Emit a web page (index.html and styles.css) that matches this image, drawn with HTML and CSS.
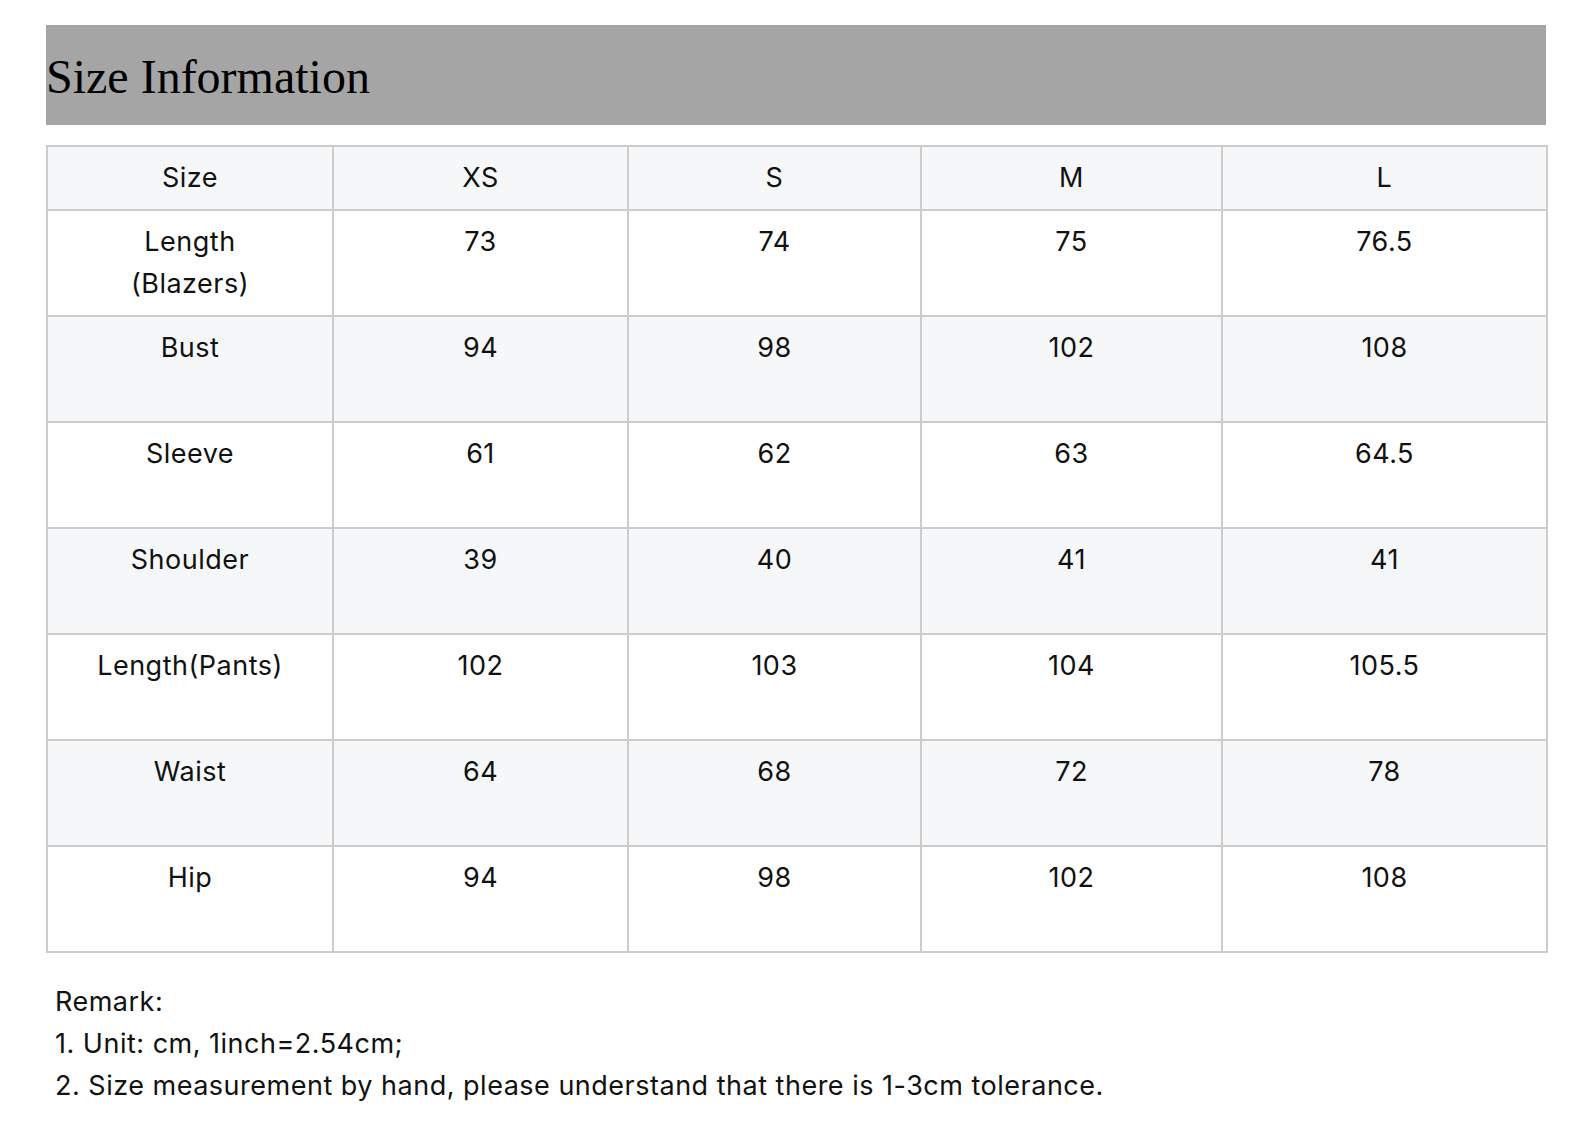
FILE: index.html
```html
<!DOCTYPE html>
<html lang="en">
<head>
<meta charset="utf-8">
<title>Size Information</title>
<link rel="stylesheet" href="styles.css">
</head>
<body>
<div class="page">
  <h1 class="title">Size Information</h1>
  <table class="sizes">
    <colgroup>
      <col class="c1"><col class="c2"><col class="c3"><col class="c4"><col class="c5">
    </colgroup>
    <thead>
      <tr><th>Size</th><th>XS</th><th>S</th><th>M</th><th>L</th></tr>
    </thead>
    <tbody>
      <tr><td>Length<br>(Blazers)</td><td>73</td><td>74</td><td>75</td><td>76.5</td></tr>
      <tr><td>Bust</td><td>94</td><td>98</td><td>102</td><td>108</td></tr>
      <tr><td>Sleeve</td><td>61</td><td>62</td><td>63</td><td>64.5</td></tr>
      <tr><td>Shoulder</td><td>39</td><td>40</td><td>41</td><td>41</td></tr>
      <tr><td>Length(Pants)</td><td>102</td><td>103</td><td>104</td><td>105.5</td></tr>
      <tr><td>Waist</td><td>64</td><td>68</td><td>72</td><td>78</td></tr>
      <tr><td>Hip</td><td>94</td><td>98</td><td>102</td><td>108</td></tr>
    </tbody>
  </table>
  <div class="remark">
    <p>Remark:</p>
    <p>1. Unit: cm, 1inch=2.54cm;</p>
    <p>2. Size measurement by hand, please understand that there is 1-3cm tolerance.</p>
  </div>
</div>
</body>
</html>
```

FILE: styles.css
```css
html, body {
  margin: 0;
  padding: 0;
  background: #ffffff;
}

.page {
  width: 1500px;
  padding: 25px 0 0 46px;
}

.title {
  margin: 0;
  background: #a5a5a5;
  font-family: "Liberation Serif", "Times New Roman", serif;
  font-weight: normal;
  font-size: 48px;
  line-height: 55px;
  padding: 24px 0 21px 0;
  color: #000;
}

.sizes {
  margin-top: 20px;
  width: 1500px;
  table-layout: fixed;
  border-collapse: collapse;
  font-family: Inter, "Noto Sans", sans-serif;
  font-size: 27px;
  letter-spacing: 0.5px;
  line-height: 42px;
  color: #111;
}

.sizes .c1 { width: 286px; }
.sizes .c2 { width: 295px; }
.sizes .c3 { width: 293px; }
.sizes .c4 { width: 301px; }
.sizes .c5 { width: 325px; }

.sizes th,
.sizes td {
  border: 2px solid #cccccc;
  padding: 10px 8px;
  text-align: center;
  vertical-align: top;
  font-weight: normal;
}

.sizes thead th {
  background: #f6f7f9;
}

.sizes tbody td {
  height: 84px;
}

.sizes tbody tr:nth-child(even) td {
  background: #f6f7f9;
}

.remark {
  padding: 28px 0 0 9px;
  font-family: Inter, "Noto Sans", sans-serif;
  font-size: 27px;
  letter-spacing: 0.5px;
  line-height: 42px;
  color: #111;
}

.remark p {
  margin: 0;
}
```
